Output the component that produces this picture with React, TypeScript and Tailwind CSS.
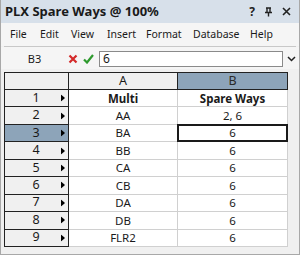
import React from 'react';

const rows = [
  { n: 1, a: 'Multi', b: 'Spare Ways', bold: true },
  { n: 2, a: 'AA', b: '2, 6' },
  { n: 3, a: 'BA', b: '6' },
  { n: 4, a: 'BB', b: '6' },
  { n: 5, a: 'CA', b: '6' },
  { n: 6, a: 'CB', b: '6' },
  { n: 7, a: 'DA', b: '6' },
  { n: 8, a: 'DB', b: '6' },
  { n: 9, a: 'FLR2', b: '6' },
];

// each menu entry gets its own slot width so the items land where the dialog puts them
const menu = [
  { label: 'File', w: 'w-[30px]' },
  { label: 'Edit', w: 'w-[31px]' },
  { label: 'View', w: 'w-[36px]' },
  { label: 'Insert', w: 'w-[39px]' },
  { label: 'Format', w: 'w-[47px]' },
  { label: 'Database', w: 'w-[57px]' },
  { label: 'Help', w: 'w-[30px]' },
];
const activeRow = 3;

const Arrow = () => (
  <svg width="4" height="7" viewBox="0 0 4 7" className="absolute right-[3px] top-1/2 -translate-y-1/2">
    <path d="M0 0 L4 3.5 L0 7 Z" fill="#000" />
  </svg>
);

export default function App() {
  return (
    <div
      className="w-[300px] h-[255px] overflow-hidden bg-[#f0f0f0] border-x border-b border-[#a8a8a8] flex flex-col text-[12px] text-[#1a1a1a]"
      style={{ fontFamily: '"Noto Sans", "Open Sans", sans-serif' }}
    >
      {/* title bar */}
      <div className="h-[23px] bg-[#d7e0ea] flex items-center pl-[4px] pr-[8px] shrink-0">
        <span className="font-bold text-[13px]">PLX Spare Ways @ 100%</span>
        <div className="ml-auto flex items-center gap-[9px] text-[#222]">
          <span className="font-bold text-[12px]">?</span>
          <svg width="9" height="10" viewBox="0 0 9 10">
            <path d="M2 1 H7 M3 1 V5 M6 1 V5 M1 5.5 H8 M4.5 5.5 V9.5" stroke="#222" strokeWidth="1.4" fill="none" />
          </svg>
          <svg width="9" height="9" viewBox="0 0 9 9">
            <path d="M1 1 L8 8 M8 1 L1 8" stroke="#222" strokeWidth="1.6" />
          </svg>
        </div>
      </div>

      {/* menu bar */}
      <div className="h-[23px] bg-[#f5f5f5] flex items-center pl-[9px] text-[10.5px] shrink-0">
        {menu.map((m) => (
          <span key={m.label} className={`${m.w} shrink-0`}>
            {m.label}
          </span>
        ))}
      </div>
      <div className="mx-[3px] h-px bg-[#c8c8c8] shrink-0" />

      {/* formula bar */}
      <div className="h-[22px] bg-[#f5f5f5] flex items-center pt-[2px] shrink-0">
        <span className="w-[66px] text-center pl-[1px] text-[11px]">B3</span>
        <svg width="10" height="10" viewBox="0 0 10 10" className="ml-[1px]">
          <path d="M1.5 1.5 L8.5 8.5 M8.5 1.5 L1.5 8.5" stroke="#d42a2a" strokeWidth="2.2" />
        </svg>
        <svg width="11" height="10" viewBox="0 0 11 10" className="ml-[5px]">
          <path d="M1 5.5 L4 8.5 L10 1" stroke="#2e9a2e" strokeWidth="2.2" fill="none" />
        </svg>
        <div className="ml-[5px] w-[184px] h-[16px] bg-white border border-[#8a8a8a] flex items-center pl-[3px] text-[12px]">
          6
        </div>
        <svg width="9" height="6" viewBox="0 0 9 6" className="ml-[4px]">
          <path d="M1 1 L4.5 4.5 L8 1" stroke="#222" strokeWidth="1.5" fill="none" />
        </svg>
      </div>

      {/* grid */}
      <div className="flex mt-[3px] ml-[3px] mr-[8px] text-[11.5px]">
        <div className="flex flex-col border-l border-t border-[#222] bg-white">
          <div className="flex h-[17px]">
            <div className="w-[64px] bg-[#f0f0f0] border-r border-b border-[#222]" />
            <div className="w-[109px] bg-[#f0f0f0] border-r border-b border-[#222] flex items-center justify-center text-[12.5px]">
              A
            </div>
            <div className="w-[110px] bg-[#8da4b9] border-r border-b border-[#222] flex items-center justify-center text-[12.5px] text-[#2a2a2a]">
              B
            </div>
          </div>
          {rows.map((r) => (
            <div key={r.n} className="flex h-[17.45px]">
              <div
                className={`relative w-[64px] border-r border-b border-[#222] flex items-center justify-center pr-[1px] text-[12.5px] ${
                  r.n === activeRow ? 'bg-[#8da4b9]' : 'bg-[#f0f0f0]'
                }`}
              >
                {r.n}
                <Arrow />
              </div>
              <div
                className={`w-[109px] border-r border-b border-[#d0d0d0] flex items-center justify-center ${
                  r.bold ? 'font-bold' : ''
                }`}
              >
                {r.a}
              </div>
              <div
                className={`relative w-[110px] border-r border-b border-[#d0d0d0] flex items-center justify-center ${
                  r.bold ? 'font-bold' : ''
                }`}
              >
                {r.b}
                {r.n === activeRow && (
                  <div className="absolute -left-px -top-px -right-px -bottom-px border-2 border-[#1a1a1a]" />
                )}
              </div>
            </div>
          ))}
        </div>
      </div>
    </div>
  );
}
